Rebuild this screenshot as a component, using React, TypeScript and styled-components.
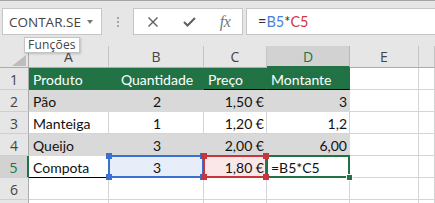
import { Fragment } from 'react'
import styled, { createGlobalStyle } from 'styled-components'

const GREEN = '#217346'
const BAND = '#d9d9d9'
const GRID = '#d4d4d4'
const HEAD_BG = '#e6e6e6'
const HEAD_LINE = '#ababab'

const RING: Record<string, string> = {
	blue: '#3b6fd0',
	red: '#c8363d',
	green: GREEN,
}

const GlobalStyle = createGlobalStyle`
	html, body {
		margin: 0;
		padding: 0;
		background: #fff;
		overflow: hidden;
	}
`

const Window = styled.div`
	position: relative;
	width: 435px;
	height: 203px;
	overflow: hidden;
	display: flex;
	flex-direction: column;
	font-family: Lato, 'Open Sans', sans-serif;
`

const FormulaBar = styled.div`
	flex-shrink: 0;
	height: 46px;
	box-sizing: border-box;
	border-top: 1px solid #a6a6a6;
	background: ${HEAD_BG};
	display: flex;
	align-items: flex-start;
	padding: 7px 0 0 2px;
`

const NameBox = styled.div`
	width: 100px;
	height: 27px;
	box-sizing: border-box;
	background: #fff;
	border: 1px solid #c6c6c6;
	display: flex;
	align-items: center;
	padding-left: 6px;
	font-family: 'Open Sans', sans-serif;
	font-size: 13.5px;
	color: #444;
`

const Caret = styled.span`
	margin-left: auto;
	margin-right: 8px;
	width: 0;
	height: 0;
	border-left: 3.5px solid transparent;
	border-right: 3.5px solid transparent;
	border-top: 4px solid #777;
`

const Grip = styled.div`
	width: 2px;
	height: 27px;
	margin: 0 14px 0 15px;
	display: flex;
	align-items: center;
`

const ButtonBox = styled.div`
	width: 110px;
	height: 27px;
	box-sizing: border-box;
	background: #fff;
	border: 1px solid #c6c6c6;
	display: grid;
	grid-template-columns: repeat(3, 36px);
	padding-left: 1px;
`

const BarButton = styled.div`
	display: flex;
	align-items: center;
	justify-content: center;
	color: #7a7a7a;
`

const Fx = styled.span`
	font-family: 'Liberation Serif', serif;
	font-style: italic;
	font-size: 16px;
	color: #777;
	letter-spacing: -0.5px;
`

const FormulaInput = styled.div`
	flex: 1;
	height: 27px;
	margin-left: 3px;
	box-sizing: border-box;
	background: #fff;
	border: 1px solid #c6c6c6;
	border-right: none;
	display: flex;
	align-items: center;
	padding-left: 11px;
	font-size: 14.5px;
	color: #333;
`

const Ref = styled.span<{ $c: string }>`
	color: ${(p) => p.$c};
`

const Tooltip = styled.div`
	position: absolute;
	left: 24px;
	top: 37px;
	z-index: 5;
	height: 16px;
	box-sizing: border-box;
	padding: 0 3px;
	background: #fff;
	border: 1px solid #c4c4c4;
	box-shadow: 1px 1px 2px rgba(0, 0, 0, 0.18);
	font-family: 'Open Sans', sans-serif;
	font-size: 12px;
	line-height: 14px;
	color: #444;
	letter-spacing: 0.2px;
`

const Sheet = styled.div`
	display: grid;
	grid-template-columns: 29px 80px 95px 63px 83px 69px 1fr;
	grid-auto-rows: 22px;
`

const Corner = styled.div`
	box-sizing: border-box;
	background: ${HEAD_BG};
	border-right: 1px solid ${HEAD_LINE};
	border-bottom: 1px solid ${HEAD_LINE};
	display: flex;
	align-items: flex-end;
	justify-content: flex-end;
	padding: 0 2px 1px 0;
`

const ColHead = styled.div<{ $active?: boolean }>`
	box-sizing: border-box;
	background: ${(p) => (p.$active ? '#d2d2d2' : HEAD_BG)};
	color: ${(p) => (p.$active ? GREEN : '#444')};
	border-right: 1px solid ${(p) => (p.$active ? '#b8b8b8' : '#c4c4c4')};
	border-bottom: ${(p) => (p.$active ? `2px solid ${GREEN}` : `1px solid ${HEAD_LINE}`)};
	display: flex;
	align-items: center;
	justify-content: center;
	font-family: 'Open Sans', sans-serif;
	font-size: 14px;
`

const RowHead = styled.div<{ $active?: boolean }>`
	box-sizing: border-box;
	background: ${(p) => (p.$active ? '#d2d2d2' : HEAD_BG)};
	color: ${(p) => (p.$active ? GREEN : '#444')};
	border-right: ${(p) => (p.$active ? `2px solid ${GREEN}` : `1px solid ${HEAD_LINE}`)};
	border-bottom: 1px solid #cfcfcf;
	display: flex;
	align-items: center;
	justify-content: center;
	padding-top: 1px;
	font-family: 'Open Sans', sans-serif;
	font-size: 14px;
`

const Cell = styled.div<{ $fill?: string; $align?: string; $color?: string; $under?: string }>`
	position: relative;
	box-sizing: border-box;
	display: flex;
	align-items: center;
	justify-content: ${(p) =>
		p.$align === 'center' ? 'center' : p.$align === 'right' ? 'flex-end' : 'flex-start'};
	padding: 2px 2px 0 4px;
	background: ${(p) => p.$fill ?? '#fff'};
	color: ${(p) => p.$color ?? '#111'};
	border-right: 1px solid ${(p) => p.$fill ?? GRID};
	border-bottom: 1px solid ${(p) => p.$under ?? p.$fill ?? GRID};
	font-size: 14px;
	white-space: nowrap;
`

const Ring = styled.div<{ $c: string }>`
	position: absolute;
	top: -1px;
	left: -1px;
	right: -1px;
	bottom: -1px;
	border: 2px solid ${(p) => p.$c};
	z-index: 1;
	pointer-events: none;
`

const Handle = styled.span<{ $c: string; $x: 'left' | 'right'; $y: 'top' | 'bottom' }>`
	position: absolute;
	${(p) => p.$x}: -3px;
	${(p) => p.$y}: -3px;
	width: 6px;
	height: 6px;
	background: ${(p) => p.$c};
	z-index: 2;
`

const FillHandle = styled.span`
	position: absolute;
	right: -4px;
	bottom: -4px;
	width: 7px;
	height: 7px;
	box-sizing: border-box;
	border: 1px solid #fff;
	background: ${GREEN};
	z-index: 2;
`

type Spec = {
	text?: string
	align?: 'left' | 'center' | 'right'
	fill?: string
	color?: string
	under?: string
	ring?: 'blue' | 'red' | 'green'
}

const head = (text: string, align: Spec['align'] = 'left', under?: string): Spec => ({
	text,
	align,
	fill: GREEN,
	color: '#fff',
	under,
})

// row 7 only peeks in at the bottom edge, so it carries no label
const rows: { n: number; label?: string; active?: boolean; cells: Spec[] }[] = [
	{
		n: 1,
		cells: [head('Produto'), head('Quantidade', 'center'), head('Preço', 'left', '#000'), head('Montante', 'left', '#000')],
	},
	{
		n: 2,
		cells: [
			{ text: 'Pão', fill: BAND },
			{ text: '2', align: 'center', fill: BAND },
			{ text: '1,50 €', align: 'right', fill: BAND },
			{ text: '3', align: 'right', fill: BAND },
		],
	},
	{
		n: 3,
		cells: [
			{ text: 'Manteiga' },
			{ text: '1', align: 'center' },
			{ text: '1,20 €', align: 'right' },
			{ text: '1,2', align: 'right' },
		],
	},
	{
		n: 4,
		cells: [
			{ text: 'Queijo', fill: BAND },
			{ text: '3', align: 'center', fill: BAND },
			{ text: '2,00 €', align: 'right', fill: BAND },
			{ text: '6,00', align: 'right', fill: BAND },
		],
	},
	{
		n: 5,
		active: true,
		cells: [
			{ text: 'Compota', under: '#000' },
			{ text: '3', align: 'center', fill: '#e8eef9', ring: 'blue' },
			{ text: '1,80 €', align: 'right', fill: '#fbe7e8', ring: 'red' },
			{ text: '=B5*C5', ring: 'green' },
		],
	},
	{ n: 6, cells: [] },
	{ n: 7, label: '', cells: [] },
]

const columns = ['A', 'B', 'C', 'D', 'E', '']

function SheetCell({ spec }: { spec: Spec }) {
	const c = spec.ring ? RING[spec.ring] : ''
	return (
		<Cell $fill={spec.fill} $align={spec.align} $color={spec.color} $under={spec.under}>
			{spec.text}
			{spec.ring && <Ring $c={c} />}
			{(spec.ring === 'blue' || spec.ring === 'red') && (
				<>
					<Handle $c={c} $x="left" $y="top" />
					<Handle $c={c} $x="right" $y="top" />
					<Handle $c={c} $x="left" $y="bottom" />
					<Handle $c={c} $x="right" $y="bottom" />
				</>
			)}
			{spec.ring === 'green' && <FillHandle />}
		</Cell>
	)
}

export default function App() {
	return (
		<Window>
			<GlobalStyle />
			<FormulaBar>
				<NameBox>
					CONTAR.SE
					<Caret />
				</NameBox>
				<Grip>
					<svg width="2" height="10" viewBox="0 0 2 10">
						<rect x="0" y="0" width="2" height="2" fill="#a4a4a4" />
						<rect x="0" y="4" width="2" height="2" fill="#a4a4a4" />
						<rect x="0" y="8" width="2" height="2" fill="#a4a4a4" />
					</svg>
				</Grip>
				<ButtonBox>
					<BarButton>
						<svg width="10" height="10" viewBox="0 0 10 10">
							<path d="M0.5 0.5 L9.5 9.5 M9.5 0.5 L0.5 9.5" stroke="#5e5e5e" strokeWidth="1.4" fill="none" />
						</svg>
					</BarButton>
					<BarButton>
						<svg width="13" height="10" viewBox="0 0 13 10">
							<path d="M1 5 L4.5 8.5 L12 1" stroke="#5e5e5e" strokeWidth="2" fill="none" />
						</svg>
					</BarButton>
					<BarButton>
						<Fx>fx</Fx>
					</BarButton>
				</ButtonBox>
				<FormulaInput>
					=<Ref $c="#4a7fd8">B5</Ref>*<Ref $c="#d0383f">C5</Ref>
				</FormulaInput>
			</FormulaBar>
			<Tooltip>Funções</Tooltip>
			<Sheet>
				<Corner>
					<svg width="14" height="11" viewBox="0 0 14 11">
						<polygon points="14,0 14,11 0,11" fill="#bdbdbd" />
					</svg>
				</Corner>
				{columns.map((col, i) => (
					<ColHead key={i} $active={col === 'D'}>
						{col}
					</ColHead>
				))}
				{rows.map((row) => (
					<Fragment key={row.n}>
						<RowHead $active={row.active}>{row.label ?? row.n}</RowHead>
						{columns.map((_, i) => (
							<SheetCell key={i} spec={row.cells[i] ?? {}} />
						))}
					</Fragment>
				))}
			</Sheet>
		</Window>
	)
}
